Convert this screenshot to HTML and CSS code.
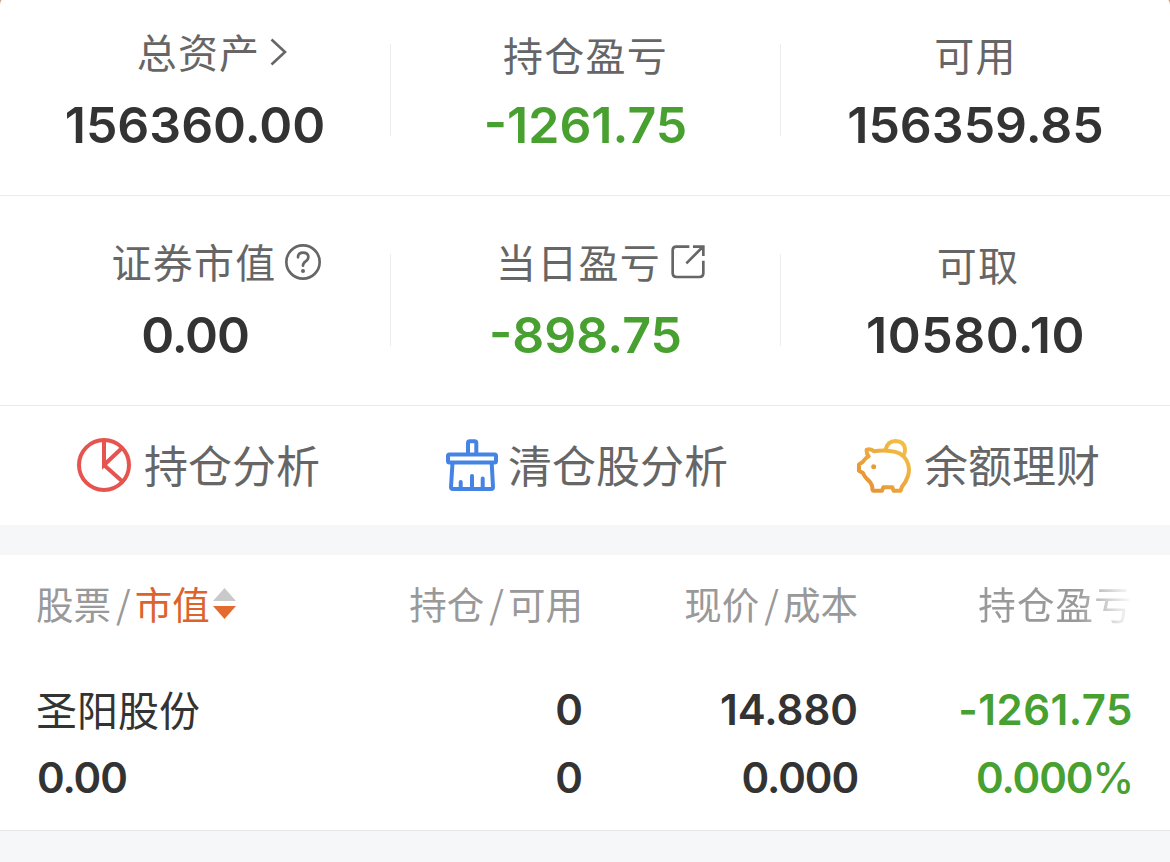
FILE: index.html
```
<!DOCTYPE html>
<html lang="zh-CN">
<head>
    <title>持仓</title>
    <meta charset="UTF-8">
    <meta name="viewport" content="width=device-width, initial-scale=1.0">
    <link rel="stylesheet" href="styles.css">
</head>
<body>
    <div class="page">
        <div class="summary">
            <div class="cell">
                <div class="label label-assets">总资产
                    <svg class="icon-arrow" width="17" height="28" viewBox="0 0 17 28"><path d="M1.5 1.5L15 14L1.5 26.5"/></svg>
                </div>
                <div class="value">156360.00</div>
            </div>
            <div class="cell">
                <div class="label">持仓盈亏</div>
                <div class="value green">-1261.75</div>
            </div>
            <div class="cell">
                <div class="label">可用</div>
                <div class="value">156359.85</div>
            </div>
        </div>

        <div class="summary">
            <div class="cell">
                <div class="label label-market">证券市值
                    <svg class="icon-help" width="36" height="36" viewBox="855 72 108 108"><circle cx="909" cy="126" r="50"/><path d="M894 112Q894 98 909 98Q925 98 925 111Q925 119 917 124Q909 129 909 137"/><circle class="dot" cx="909" cy="153" r="6"/></svg>
                </div>
                <div class="value zero">0.00</div>
            </div>
            <div class="cell">
                <div class="label label-today">当日盈亏
                    <svg class="icon-link" width="34" height="34" viewBox="841 75 102 102"><path d="M896 80H857Q846 80 846 91V160Q846 171 857 171H927Q938 171 938 160V122M887 130L936 81M907 80H938V108"/></svg>
                </div>
                <div class="value green">-898.75</div>
            </div>
            <div class="cell">
                <div class="label label-cash">可取</div>
                <div class="value wide">10580.10</div>
            </div>
        </div>

        <div class="actions">
            <div class="action action-pie">
                <svg width="56" height="56" viewBox="0 0 56 56" fill="none" stroke="#e5544f" stroke-width="4"><circle cx="28" cy="28" r="25"/><path d="M28 3V28L46 11M28 28L47 45"/></svg>
                <span>持仓分析</span>
            </div>
            <div class="action action-clear">
                <svg width="56" height="56" viewBox="0 0 56 56" fill="none" stroke="#4584e4" stroke-width="4" stroke-linecap="round" stroke-linejoin="round"><path d="M24 17V6Q24 4.300 25.700 4.300H30.600Q32.300 4.300 32.300 6V17"/><rect x="4" y="17.500" width="48" height="8" rx="1.500"/><path d="M8.500 26L7 50Q7 52 9 52H47Q49 52 49 50L47.700 26M16.700 51V45M28 51V39M38.700 51V41.500"/></svg>
                <span>清仓股分析</span>
            </div>
            <div class="action action-finance">
                <svg width="57" height="57" viewBox="45 33 171 171" fill="none" stroke="url(#gold)" stroke-width="12" stroke-linejoin="round">
                    <defs>
                        <linearGradient id="gold" gradientUnits="userSpaceOnUse" x1="60" y1="190" x2="200" y2="50"><stop offset="0" stop-color="#e68f35"/><stop offset="1" stop-color="#f3c145"/></linearGradient>
                    </defs>
                    <path d="M80 71Q92 67 103 76Q125 72 150 75Q184 77 199 102Q212 124 204 150Q198 168 186 182L182 194H161L157 184H130L126 194H101Q96 194 97 183Q93 168 80 158Q73 151 69 141L57 134V115L68 108Q75 97 86 91Q79 83 80 71Z"/>
                    <path d="M137 71Q143 45 166 45Q194 46 195 70Q196 78 191 87"/>
                    <circle cx="101" cy="122" r="7.500" fill="#e99b38" stroke="none"/>
                </svg>
                <span>余额理财</span>
            </div>
        </div>

        <div class="band"></div>

        <div class="holdings">
            <div class="row row-head">
                <div class="sort">股票<i>/</i><span class="active">市值</span>
                    <svg width="23" height="31" viewBox="0 0 23 31"><path fill="#c9c9c9" d="M11.500 0L23 13H0Z"/><path fill="#e56a30" d="M0 18H23L11.500 31Z"/></svg>
                </div>
                <div>持仓<i>/</i>可用</div>
                <div>现价<i>/</i>成本</div>
                <div class="fade">持仓盈亏</div>
            </div>
            <div class="row row-name">
                <div class="name">圣阳股份</div>
                <div>0</div>
                <div>14.880</div>
                <div class="green wide">-1261.75</div>
            </div>
            <div class="row">
                <div class="zero">0.00</div>
                <div>0</div>
                <div class="zero">0.000</div>
                <div class="green zero">0.000<span class="percent">%</span></div>
            </div>
        </div>

        <div class="footer"></div>
    </div>
</body>
</html>
```

FILE: styles.css
```
* {
    box-sizing: border-box;
}
body {
    margin: 0;
    background-color: #c7a58c;
    font-family: Inter, "Noto Sans CJK SC", sans-serif;
    color: #333;
}
.page {
    height: 862px;
    overflow: hidden;
    background-color: #fff;
    border-radius: 2px 2px 0 0 / 6px 6px 0 0;
    display: flex;
    flex-direction: column;
}
.summary {
    display: grid;
    grid-template-columns: repeat(3, 1fr);
    height: 196px;
    padding-top: 44px;
    border-bottom: 1px solid #ebebeb;
}
.summary + .summary {
    height: 210px;
    padding-top: 58px;
}
.cell {
    height: 92px;
    text-align: center;
}
.cell + .cell {
    border-left: 1px solid #ededed;
}
.label {
    display: flex;
    align-items: center;
    justify-content: center;
    height: 44px;
    margin-top: -12px;
    margin-bottom: 19px;
    font-family: "Noto Sans CJK SC", sans-serif;
    font-size: 40px;
    line-height: 44px;
    letter-spacing: 1.2px;
    color: #666;
}
.label svg {
    fill: none;
    stroke: #666;
    stroke-width: 8;
    flex: none;
}
.label .icon-arrow {
    stroke-width: 2.6;
    margin: 2px 0 0 10px;
}
.label .icon-help {
    margin: 2px 0 0 9px;
    stroke-linecap: round;
}
.label .icon-help .dot {
    fill: #666;
    stroke: none;
}
.label .icon-link {
    margin: 2px 0 0 10px;
}
.label-assets,
.label-market,
.label-today {
    margin-top: -15px;
    margin-bottom: 22px;
}
.label-assets {
    padding-left: 34px;
}
.label-market {
    padding-left: 43px;
}
.label-today {
    padding-left: 30px;
}
.label-cash {
    padding-left: 5px;
}
.value {
    font-size: 50px;
    line-height: 60px;
    font-weight: 600;
}
.zero {
    letter-spacing: -1.1px;
}
.wide {
    letter-spacing: 0.5px;
}
.green {
    color: #47a02f;
}
.actions {
    display: flex;
    height: 119px;
    font-family: "Noto Sans CJK SC", sans-serif;
    font-size: 44px;
    line-height: 54px;
    color: #666;
}
.action {
    display: flex;
    width: 390px;
    padding-top: 31px;
}
.action-pie {
    padding-left: 76px;
}
.action-clear {
    padding-left: 54px;
}
.action-finance {
    padding-left: 75px;
}
.action span {
    margin-left: 12px;
}
.action-clear span {
    margin-left: 8px;
}
.band {
    height: 30px;
    background-color: #f6f7f9;
}
.holdings {
    height: 276px;
    border-bottom: 1px solid #e6e6e6;
}
.row {
    display: grid;
    grid-template-columns: 271px 275px 275px 275px;
    padding-left: 37px;
    font-size: 42px;
    line-height: 68px;
    font-weight: 600;
    text-align: right;
}
.row > :first-child {
    text-align: left;
}
.row-head {
    height: 121px;
    font-family: "Noto Sans CJK SC", sans-serif;
    font-size: 37.5px;
    font-weight: 400;
    line-height: 96px;
    color: #999;
}
.row-head i {
    font-style: normal;
    margin: 0 4px 0 5px;
}
.sort {
    display: flex;
    align-items: center;
    height: 96px;
    margin-left: -1px;
}
.sort .active {
    color: #dc632b;
}
.sort svg {
    margin-left: 3px;
}
.fade {
    letter-spacing: 1.2px;
    -webkit-mask-image: linear-gradient(to right, #000 220px, transparent 275px);
    mask-image: linear-gradient(to right, #000 220px, transparent 275px);
}
.name {
    font-family: "Noto Sans CJK SC", sans-serif;
    font-size: 41px;
    font-weight: 400;
    line-height: 64px;
    margin-left: -1px;
}
.percent {
    font-weight: 500;
}
.footer {
    flex: 1;
    background-color: #f6f7f9;
}
```
